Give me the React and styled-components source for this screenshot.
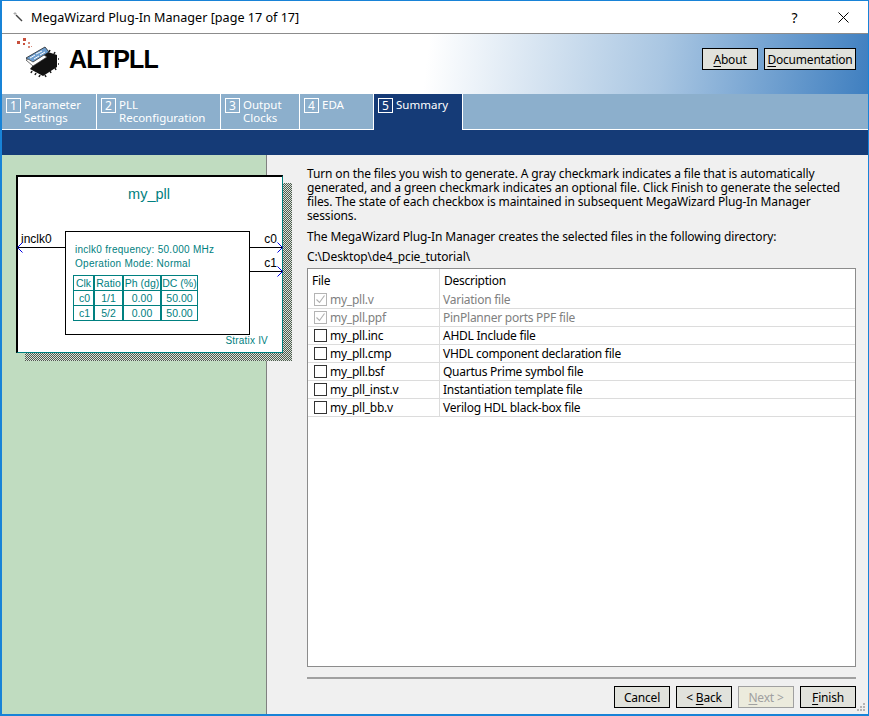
import React from 'react';
import styled, { createGlobalStyle } from 'styled-components';

const GlobalStyle = createGlobalStyle`
  html, body { margin: 0; padding: 0; background: #fff; }
  * { box-sizing: border-box; }
`;

const uiFont = `"Noto Sans", "DejaVu Sans", sans-serif`;
const teal = '#008080';

const Window = styled.div`
  position: relative;
  width: 869px;
  height: 716px;
  display: flex;
  flex-direction: column;
  border: 1px solid #1883d7;
  border-left-width: 2px;
  border-bottom-width: 2px;
  font-family: ${uiFont};
  font-size: 12px;
  color: #000;
  background: #f0f0f0;
  overflow: hidden;
`;

const TitleBar = styled.div`
  height: 33px;
  flex: none;
  display: flex;
  align-items: center;
  background: #fff;
  border-bottom: 1px solid #8c8c8c;
  margin-left: -1px;
  padding-left: 11px;
`;

const TitleText = styled.div`
  margin-left: 7px;
  font-size: 12.6px;
  flex: 1;
`;

const TitleControl = styled.div`
  width: 49px;
  height: 30px;
  display: flex;
  align-items: center;
  justify-content: center;
  font-size: 14px;
`;

const Header = styled.div`
  height: 60px;
  flex: none;
  display: flex;
  align-items: center;
  gap: 6px;
  padding: 0 12px 10px 13px;
  background: linear-gradient(97deg, #fff 0%, #fff 49%, #a9c6e2 76%, #3f7fc0 100%);
`;

const Logo = styled.svg`
  flex: none;
  margin-bottom: 4px;
`;

const Brand = styled.div`
  flex: 1;
  margin-left: 4px;
  padding-top: 1px;
  font-family: "Liberation Sans", Arial, sans-serif;
  font-weight: 700;
  font-size: 25px;
  letter-spacing: -0.85px;
`;

const PushButton = styled.div`
  width: ${p => p.$w || 56}px;
  height: 22px;
  display: flex;
  align-items: center;
  justify-content: center;
  border: 1px solid ${p => (p.$disabled ? '#a0a0a0' : '#000')};
  background: ${p => (p.$disabled ? '#ecebdd' : '#e1e2dc')};
  color: ${p => (p.$disabled ? '#a0a0a0' : '#000')};
  font-size: 12px;
  letter-spacing: -0.2px;
  u { text-underline-offset: 2px; }
`;

const TabRow = styled.div`
  height: 36px;
  flex: none;
  display: flex;
  background: #8cafcc;
`;

const Tab = styled.div`
  width: ${p => p.$w}px;
  flex: ${p => (p.$fill ? 1 : 'none')};
  display: flex;
  gap: 3px;
  padding: 4px 0 0 4px;
  color: #fff;
  background: ${p => (p.$active ? '#153b77' : '#8cafcc')};
  border-right: 1px solid #fff;
  border-bottom: ${p => (p.$active ? 'none' : '1px solid #fff')};
  ${p => p.$fill && 'border-right: none;'}
`;

const TabNumber = styled.span`
  width: 15px;
  height: 15px;
  flex: none;
  display: flex;
  align-items: center;
  justify-content: center;
  border: 1px solid #fff;
  font-size: 12px;
`;

const TabLabel = styled.span`
  line-height: 13px;
  font-size: 11.5px;
  white-space: pre-line;
`;

const Band = styled.div`
  height: 25px;
  flex: none;
  background: #153b77;
`;

const Body = styled.div`
  flex: 1;
  display: flex;
  min-height: 0;
`;

const Side = styled.div`
  width: 265px;
  flex: none;
  padding: 20px 0 0 14px;
  background: #c0dcc0;
  border-right: 1px solid #808080;
`;

const SymbolWrap = styled.div`
  position: relative;
  z-index: 0;
  width: 267px;
`;

/* Block symbol: a small free canvas, so the pins and core sit at their own offsets */
const Symbol = styled.div`
  position: relative;
  width: 267px;
  height: 178px;
  background: #fff;
  border: 1px solid ${teal};
  border-top: 2px solid #000;
  border-left: 2px solid #000;
  color: ${teal};
  font-family: "Liberation Sans", Arial, sans-serif;
  &::before {
    content: '';
    position: absolute;
    z-index: -1;
    left: 7px;
    top: 6px;
    width: 267px;
    height: 178px;
    background: repeating-conic-gradient(#4d5a4d 0 25%, #d8e0d8 0 50%) 0 0 / 2px 2px;
  }
`;

const SymbolName = styled.div`
  text-align: center;
  font-size: 14.5px;
  margin-top: 9px;
  margin-right: 2px;
`;

const Core = styled.div`
  position: absolute;
  left: 47px;
  top: 54px;
  width: 185px;
  height: 104px;
  border: 1px solid #000;
  padding: 11px 0 0 9px;
  font-size: 10px;
  line-height: 13.5px;
  letter-spacing: 0.27px;
`;

const ClockTable = styled.div`
  display: grid;
  grid-template-columns: 21px 29px 38px 36px;
  margin: 5px 0 0 -2px;
  width: 125px;
  border-top: 1px solid ${teal};
  border-left: 1px solid ${teal};
`;

const ClockCell = styled.div`
  height: 15px;
  line-height: 14px;
  text-align: ${p => (p.$right ? 'right' : 'center')};
  padding-right: ${p => (p.$right ? 3 : 0)}px;
  border-right: ${p => (p.$thick ? 2 : 1)}px solid ${teal};
  border-bottom: 1px solid ${teal};
  font-size: 10.5px;
  letter-spacing: 0;
  white-space: nowrap;
  overflow: hidden;
`;

const Pin = styled.div`
  position: absolute;
  top: ${p => p.$top}px;
  left: ${p => p.$left}px;
  width: ${p => p.$width}px;
  height: 1px;
  background: #000;
`;

const PinLabel = styled.span`
  position: absolute;
  top: ${p => p.$top}px;
  ${p => (p.$right ? 'right: 5px;' : 'left: 3px;')}
  font-size: 12px;
  color: #000;
`;

const PinArrow = styled.svg`
  position: absolute;
  top: ${p => p.$top}px;
  ${p => (p.$right ? 'right: -1px;' : 'left: -1px;')}
`;

const CoreNote = styled.span`
  position: absolute;
  right: 14px;
  bottom: 6px;
  font-size: 10px;
  letter-spacing: 0.2px;
`;

const Main = styled.div`
  flex: 1;
  min-width: 0;
  display: flex;
  flex-direction: column;
  padding: 12px 12px 5px 40px;
  letter-spacing: -0.13px;
`;

const Paragraph = styled.p`
  margin: 0 0 ${p => p.$after || 0}px;
  line-height: 14px;
  font-size: 12px;
`;

const FileList = styled.div`
  height: 399px;
  flex: none;
  margin-top: 4px;
  background: #fff;
  border: 1px solid #8c8c8c;
  letter-spacing: -0.25px;
`;

const FileRow = styled.div`
  display: grid;
  grid-template-columns: 132px 1fr;
  height: ${p => (p.$head ? 22 : 18)}px;
  border-bottom: ${p => (p.$head ? 'none' : '1px solid #dcdcdc')};
  color: ${p => (p.$muted ? '#808080' : '#000')};
`;

const FileCell = styled.div`
  display: flex;
  align-items: center;
  gap: 3px;
  padding-left: ${p => p.$pad}px;
  border-right: ${p => (p.$first ? '1px solid #dcdcdc' : 'none')};
  white-space: nowrap;
`;

const Check = styled.span`
  width: 13px;
  height: 13px;
  flex: none;
  display: flex;
  align-items: center;
  justify-content: center;
  background: #fff;
  border: 1px solid ${p => (p.$muted ? '#b4b4b4' : '#333')};
`;

const Rule = styled.div`
  height: 2px;
  flex: none;
  margin-top: 10px;
  background: #a0a0a0;
`;

const Footer = styled.div`
  display: flex;
  justify-content: flex-end;
  gap: 6px;
  margin-top: 7px;
`;

const Grip = styled.svg`
  position: absolute;
  right: 2px;
  bottom: 2px;
`;

const WandIcon = () => (
  <svg width="12" height="12" viewBox="0 0 12 12">
    <path d="M4 4l6 6" stroke="#444" strokeWidth="1.4" />
    <path d="M3 1v3M1.5 2.5h3" stroke="#aaa" strokeWidth="1" />
  </svg>
);

const CloseIcon = () => (
  <svg width="11" height="11" viewBox="0 0 11 11">
    <path d="M0.5 0.5l10 10M10.5 0.5l-10 10" stroke="#000" strokeWidth="1" />
  </svg>
);

const LogoIcon = () => (
  <Logo width="44" height="42" viewBox="0 0 44 42">
    {/* sparks */}
    <g fill="#c8503c">
      <rect x="2" y="5" width="3" height="3" />
      <rect x="8" y="2" width="3" height="3" />
      <rect x="8" y="7" width="2" height="2" />
      <rect x="13" y="6" width="2" height="2" fill="#d88a7a" />
      <rect x="13" y="10" width="2" height="2" fill="#d88a7a" />
      <rect x="16" y="10" width="1" height="1" fill="#d88a7a" />
    </g>
    {/* chip */}
    <path d="M15 33L30 15l12 4v12l-14 9z" fill="#111" />
    <path d="M17 35l-1 2M21 37l-1 2M25 39l-1 2M30 39l1 2M35 35l1 2M40 32l1 2M43 28h1M43 23h1M39 18l1-2M34 16l1-2" stroke="#222" strokeWidth="1.6" />
    {/* wizard page */}
    <path d="M11 22L30 11l4 5-17 11z" fill="#6f9fd0" stroke="#222" strokeWidth="0.8" />
    <path d="M15 22l5-3M21 18l6-3M19 23l5-3M25 19l5-3" stroke="#fff" strokeWidth="1" />
    <path d="M11 24l7 6 14-9-3-2-11 7-5-3z" fill="#fff" stroke="#333" strokeWidth="0.7" />
  </Logo>
);

const ThinCheck = () => (
  <svg width="11" height="11" viewBox="0 0 11 11">
    <path d="M1.5 5.5l3 3 5-7" fill="none" stroke="#b0b0b0" strokeWidth="1.1" />
  </svg>
);

const Arrow = ({ top, right }) => (
  <PinArrow $top={top} $right={right} width="6" height="11" viewBox="0 0 6 11">
    <path d={right ? 'M0.5 0.5l5 5-5 5' : 'M5.5 0.5l-5 5 5 5'} fill="none" stroke="#0000e0" strokeWidth="1" />
  </PinArrow>
);

const tabs = [
  { n: 1, w: 95, label: 'Parameter\nSettings' },
  { n: 2, w: 124, label: 'PLL\nReconfiguration' },
  { n: 3, w: 79, label: 'Output\nClocks' },
  { n: 4, w: 74, label: 'EDA' },
  { n: 5, w: 89, label: 'Summary', active: true },
];

const clockRows = [
  ['Clk', 'Ratio', 'Ph (dg)', 'DC (%)'],
  ['c0', '1/1', '0.00', '50.00'],
  ['c1', '5/2', '0.00', '50.00'],
];

const files = [
  ['my_pll.v', 'Variation file', true],
  ['my_pll.ppf', 'PinPlanner ports PPF file', true],
  ['my_pll.inc', 'AHDL Include file'],
  ['my_pll.cmp', 'VHDL component declaration file'],
  ['my_pll.bsf', 'Quartus Prime symbol file'],
  ['my_pll_inst.v', 'Instantiation template file'],
  ['my_pll_bb.v', 'Verilog HDL black-box file'],
];

export default function App() {
  return (
    <Window>
      <GlobalStyle />
      <TitleBar>
        <WandIcon />
        <TitleText>MegaWizard Plug-In Manager [page 17 of 17]</TitleText>
        <TitleControl>?</TitleControl>
        <TitleControl><CloseIcon /></TitleControl>
      </TitleBar>

      <Header>
        <LogoIcon />
        <Brand>ALTPLL</Brand>
        <PushButton><span><u>A</u>bout</span></PushButton>
        <PushButton $w={92}><span><u>D</u>ocumentation</span></PushButton>
      </Header>

      <TabRow>
        {tabs.map(t => (
          <Tab key={t.n} $w={t.w} $active={t.active}>
            <TabNumber>{t.n}</TabNumber>
            <TabLabel>{t.label}</TabLabel>
          </Tab>
        ))}
        <Tab $fill />
      </TabRow>
      <Band />

      <Body>
        <Side>
          <SymbolWrap>
            <Symbol>
              <SymbolName>my_pll</SymbolName>
              <PinLabel $top={55}>inclk0</PinLabel>
              <Pin $top={70} $left={0} $width={47} />
              <Arrow top={65} />
              <PinLabel $top={55} $right>c0</PinLabel>
              <Pin $top={70} $left={232} $width={33} />
              <Arrow top={65} right />
              <PinLabel $top={79} $right>c1</PinLabel>
              <Pin $top={94} $left={232} $width={33} />
              <Arrow top={89} right />
              <Core>
                <div>inclk0 frequency: 50.000 MHz</div>
                <div>Operation Mode: Normal</div>
                <ClockTable>
                  {clockRows.flatMap((row, r) =>
                    row.map((cell, c) => (
                      <ClockCell key={`${r}-${c}`} $thick={c < 3} $right={r > 0 && c === 0}>{cell}</ClockCell>
                    ))
                  )}
                </ClockTable>
              </Core>
              <CoreNote>Stratix IV</CoreNote>
            </Symbol>
          </SymbolWrap>
        </Side>

        <Main>
          <Paragraph $after={7}>
            Turn on the files you wish to generate. A gray checkmark indicates a file that is automatically
            generated, and a green checkmark indicates an optional file. Click Finish to generate the selected
            files. The state of each checkbox is maintained in subsequent MegaWizard Plug-In Manager
            sessions.
          </Paragraph>
          <Paragraph $after={6}>The MegaWizard Plug-In Manager creates the selected files in the following directory:</Paragraph>
          <Paragraph>C:\Desktop\de4_pcie_tutorial\</Paragraph>

          <FileList>
            <FileRow $head>
              <FileCell $first $pad={4}>File</FileCell>
              <FileCell $pad={4}>Description</FileCell>
            </FileRow>
            {files.map(([name, desc, muted]) => (
              <FileRow key={name} $muted={muted}>
                <FileCell $first $pad={6}>
                  <Check $muted={muted}>{muted && <ThinCheck />}</Check>
                  {name}
                </FileCell>
                <FileCell $pad={3}>{desc}</FileCell>
              </FileRow>
            ))}
          </FileList>

          <Rule />
          <Footer>
            <PushButton>Cancel</PushButton>
            <PushButton><span>&lt; <u>B</u>ack</span></PushButton>
            <PushButton $disabled><span><u>N</u>ext &gt;</span></PushButton>
            <PushButton><span><u>F</u>inish</span></PushButton>
          </Footer>
        </Main>
      </Body>

      <Grip width="10" height="10" viewBox="0 0 10 10">
        <g fill="#b4b4b4">
          <rect x="7" y="1" width="2" height="2" />
          <rect x="4" y="4" width="2" height="2" />
          <rect x="7" y="4" width="2" height="2" />
          <rect x="1" y="7" width="2" height="2" />
          <rect x="4" y="7" width="2" height="2" />
          <rect x="7" y="7" width="2" height="2" />
        </g>
      </Grip>
    </Window>
  );
}
